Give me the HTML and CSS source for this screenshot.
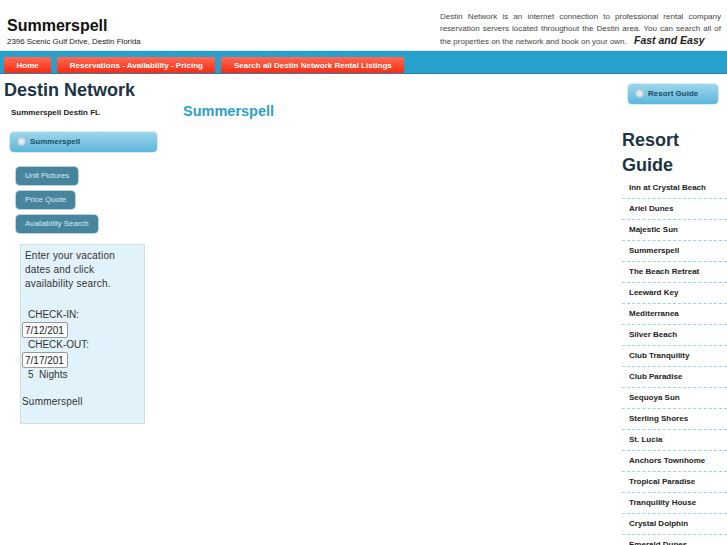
FILE: index.html
```html
<!DOCTYPE html>
<html lang="en">
<head>
    <meta charset="UTF-8">
    <title>Summerspell</title>
    <link rel="stylesheet" href="styles.css">
</head>
<body>
    <div class="header">
        <div class="brand">
            <h1>Summerspell</h1>
            <p>2396 Scenic Gulf Drive, Destin Florida</p>
        </div>
        <p class="intro">Destin Network is an internet connection to professional rental company reservation servers located throughout the Destin area. You can search all of the properties on the network and book on your own. <em>Fast and Easy</em></p>
    </div>

    <div class="nav">
        <a href="#">Home</a>
        <a href="#">Reservations - Availability - Pricing</a>
        <a href="#">Search all Destin Network Rental Listings</a>
    </div>

    <div class="main">
        <div class="left">
            <h2 class="network">Destin Network</h2>
            <h4 class="place">Summerspell Destin FL</h4>
            <div class="pill pill-left"><span class="dot"></span>Summerspell</div>
            <div class="links">
                <a href="#">Unit Pictures</a>
                <a href="#">Price Quote</a>
                <a href="#">Availability Search</a>
            </div>
            <div class="search">
                <p class="search-text">Enter your vacation dates and click availability search.</p>
                <div class="label">CHECK-IN:</div>
                <input type="text" class="date" value="7/12/201">
                <div class="label">CHECK-OUT:</div>
                <input type="text" class="date" value="7/17/201">
                <div class="label">5&nbsp; Nights</div>
                <div class="search-name">Summerspell</div>
            </div>
        </div>

        <div class="center">
            <h2>Summerspell</h2>
        </div>

        <div class="right">
            <div class="pill pill-right"><span class="dot"></span>Resort Guide</div>
            <h2 class="guide">Resort Guide</h2>
            <ul class="resorts">
                <li>Inn at Crystal Beach</li>
                <li>Ariel Dunes</li>
                <li>Majestic Sun</li>
                <li>Summerspell</li>
                <li>The Beach Retreat</li>
                <li>Leeward Key</li>
                <li>Mediterranea</li>
                <li>Silver Beach</li>
                <li>Club Tranquility</li>
                <li>Club Paradise</li>
                <li>Sequoya Sun</li>
                <li>Sterling Shores</li>
                <li>St. Lucia</li>
                <li>Anchors Townhome</li>
                <li>Tropical Paradise</li>
                <li>Tranquility House</li>
                <li>Crystal Dolphin</li>
                <li>Emerald Dunes</li>
            </ul>
        </div>
    </div>
</body>
</html>
```

FILE: styles.css
```css
html, body {
    height: 545px;
    overflow: hidden;
}

body {
    margin: 0;
    font-family: "Liberation Sans", Arial, sans-serif;
    background-color: #fff;
    color: #333;
}

.header {
    display: flex;
    justify-content: space-between;
    height: 50px;
}

.brand {
    padding: 16px 0 0 7px;
}

.brand h1 {
    margin: 0;
    font-size: 16px;
    line-height: 20px;
    color: #111;
}

.brand p {
    margin: 0;
    font-size: 7.9px;
    line-height: 11px;
    color: #222;
}

.intro {
    width: 281px;
    margin: 11px 6px 0 0;
    font-size: 8px;
    line-height: 12px;
    text-align: justify;
    color: #444;
}

.intro em {
    margin-left: 5px;
    font-size: 10.5px;
    line-height: 10px;
    font-weight: bold;
    color: #222;
}

.nav {
    display: flex;
    gap: 6px;
    height: 22px;
    padding-left: 4px;
    background-color: #27a0cc;
    border-top: 1px solid #d8edf5;
    border-bottom: 1px solid #1d86ad;
    align-items: flex-end;
}

.nav a {
    height: 16px;
    padding: 0 12.5px;
    font-size: 8px;
    font-weight: bold;
    line-height: 17px;
    color: #fff;
    text-decoration: none;
    background: linear-gradient(#ff6a55, #ff2a10);
}

.main {
    display: flex;
}

.left {
    width: 183px;
    flex-shrink: 0;
}

.network {
    margin: 5px 0 0 4px;
    font-size: 18px;
    line-height: 23px;
    color: #1c3444;
}

.place {
    margin: 5px 0 0 11px;
    font-size: 8px;
    line-height: 12px;
    color: #222;
}

.pill {
    display: flex;
    align-items: center;
    box-sizing: border-box;
    height: 20px;
    padding-bottom: 2px;
    border-radius: 4px;
    font-size: 8px;
    font-weight: bold;
    color: #1d4a63;
    background: linear-gradient(#9ed6ec, #5cb7db);
    box-shadow: 0 0 0 1px #d9eff8;
}

.dot {
    box-sizing: border-box;
    width: 9px;
    height: 9px;
    margin: 0 4px 0 7px;
    border-radius: 50%;
    background: radial-gradient(#e4e9ec 35%, #a3bccb 75%, #7fa9c0);
}

.pill-left {
    width: 147px;
    margin: 13px 0 0 10px;
}

.links {
    display: flex;
    flex-direction: column;
    align-items: flex-start;
    gap: 6px;
    margin: 15px 0 0 16px;
}

.links a {
    height: 18px;
    padding: 0 9px;
    border-radius: 4px;
    font-size: 7.8px;
    line-height: 18px;
    color: #d6ecf5;
    text-decoration: none;
    background-color: #47859f;
    box-shadow: 0 0 0 1px #b9d2dd;
}

.search {
    width: 122px;
    height: 178px;
    margin: 11px 0 0 20px;
    padding: 0 0 0 1px;
    background-color: #e1f2fa;
    border: 1px solid #d0dde3;
    font-size: 10px;
    line-height: 14px;
    color: #333;
}

.search-text {
    margin: 4px 14px 0 3px;
    letter-spacing: 0.2px;
}

.label {
    margin-left: 6px;
    line-height: 15px;
}

.search-text + .label {
    margin-top: 16px;
}

.date {
    display: block;
    box-sizing: border-box;
    width: 46px;
    height: 16px;
    margin: 0 0 -1px;
    padding: 0 2px;
    border: 1px solid #999;
    border-radius: 2px;
    font-family: inherit;
    font-size: 10px;
    color: #222;
}

.search-name {
    margin-top: 13px;
    letter-spacing: 0.2px;
}

.center {
    flex: 1;
}

.center h2 {
    margin: 28px 0 0;
    font-size: 14.5px;
    line-height: 18px;
    color: #2b9fcb;
}

.right {
    width: 105px;
    flex-shrink: 0;
}

.pill-right {
    width: 90px;
    margin: 10px 0 0 6px;
}

.guide {
    margin: 24px 0 0;
    font-size: 18px;
    line-height: 25px;
    color: #1c3444;
}

.resorts {
    margin: 0;
    padding: 0;
    list-style: none;
}

.resorts li {
    height: 20px;
    padding-left: 7px;
    border-bottom: 1px dashed #8fd6ee;
    font-size: 8px;
    font-weight: bold;
    line-height: 20px;
    color: #222;
}
```
